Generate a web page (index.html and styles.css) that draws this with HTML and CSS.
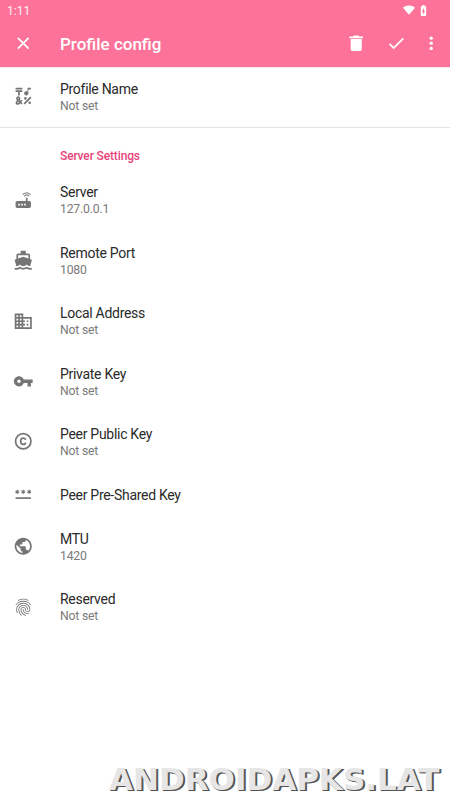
FILE: index.html
```html
<!DOCTYPE html>
<html lang="en">
<head>
<meta charset="utf-8">
<title>Profile config</title>
<link rel="stylesheet" href="styles.css">
</head>
<body>
<header class="header">
  <div class="status">
    <span class="clock">1:11</span>
    <svg class="wifi" viewBox="0 0 24 24"><path d="M12 21.5L24 7.5C20.500 4.500 16.500 3 12 3S3.500 4.500 0 7.500z"/></svg>
    <svg class="battery" viewBox="0 0 24 24"><path d="M15.670 4H14V2h-4v2H8.330C7.600 4 7 4.600 7 5.330v15.330C7 21.400 7.600 22 8.330 22h7.330c.740 0 1.340-.600 1.340-1.330V5.330C17 4.600 16.400 4 15.670 4zM11 20v-5.500H9L13 7v5.500h2L11 20z"/></svg>
  </div>
  <div class="toolbar">
    <svg class="icon" viewBox="0 0 24 24"><path d="M19 6.410L17.590 5 12 10.590 6.410 5 5 6.410 10.590 12 5 17.590 6.410 19 12 13.410 17.590 19 19 17.590 13.410 12z"/></svg>
    <h1 class="title">Profile config</h1>
    <svg class="icon trash" viewBox="0 0 24 24"><path d="M5.500 19c0 1.100.900 2 2 2h9c1.100 0 2-.900 2-2V7h-13v12zM20 4h-4.500l-1-1h-5l-1 1H4v2h16V4z"/></svg>
    <svg class="icon check" viewBox="0 0 24 24"><path d="M9 16.200L4.800 12l-1.400 1.400L9 19 21 7l-1.400-1.400L9 16.200z"/></svg>
    <svg class="icon" viewBox="0 0 24 24"><circle cx="12" cy="6" r="2"/><circle cx="12" cy="12" r="2"/><circle cx="12" cy="18" r="2"/></svg>
  </div>
</header>
<main>
  <section class="group">
    <div class="row">
      <svg class="icon" viewBox="0 0 24 24"><path d="M3 2h8v2H3zM6 11h2V7h3V5H3v2h3zM12.404 20.182l7.778-7.778 1.414 1.414-7.778 7.778zM15.500 11c1.380 0 2.500-1.120 2.500-2.500V4h3V2h-4v4.510c-.420-.320-.930-.510-1.500-.510C14.120 6 13 7.120 13 8.500s1.120 2.500 2.500 2.500z"/><circle cx="14.500" cy="14.500" r="1.500"/><circle cx="19.500" cy="19.500" r="1.500"/><path d="M9.740 15.960l-1.410 1.410-.710-.710.350-.350c.980-.980.980-2.560 0-3.540-.490-.490-1.130-.730-1.770-.730s-1.280.240-1.770.730c-.980.980-.980 2.560 0 3.540l.350.350-1.060 1.060c-.980.980-.980 2.560 0 3.540.490.490 1.130.730 1.770.730s1.280-.240 1.770-.730l1.060-1.060 1.410 1.410 1.410-1.410-1.410-1.410 1.410-1.410-1.400-1.420zM5.850 14.200c.120-.120.260-.150.350-.150s.230.030.350.150c.190.200.190.510 0 .710l-.350.350-.350-.360c-.190-.190-.190-.510 0-.700zm0 5.650c-.120.120-.260.150-.350.150s-.230-.030-.350-.150c-.190-.200-.190-.510 0-.710l1.060-1.060.710.710-1.070 1.060z"/></svg>
      <div class="text"><div class="name">Profile Name</div><div class="value">Not set</div></div>
    </div>
  </section>
  <section>
    <h2 class="category">Server Settings</h2>
    <div class="row">
      <svg class="icon" viewBox="0 0 24 24"><path d="M20.200 5.900l.800-.800C19.600 3.700 17.800 3 16 3s-3.600.700-5 2.100l.800.800C13 4.800 14.500 4.200 16 4.200s3 .600 4.200 1.700zm-.900.800c-.900-.900-2.100-1.400-3.300-1.400s-2.400.500-3.300 1.400l.800.800c.700-.700 1.600-1 2.500-1 .900 0 1.800.300 2.500 1l.800-.800zM19 13h-2V9h-2v4H5c-1.100 0-2 .900-2 2v4c0 1.100.900 2 2 2h14c1.100 0 2-.900 2-2v-4c0-1.100-.900-2-2-2zM8 18H6v-2h2v2zm3.500 0h-2v-2h2v2zm3.500 0h-2v-2h2v2z"/></svg>
      <div class="text"><div class="name">Server</div><div class="value">127.0.0.1</div></div>
    </div>
    <div class="row">
      <svg class="icon" viewBox="0 0 24 24"><path d="M20 21c-1.390 0-2.780-.470-4-1.320-2.440 1.710-5.560 1.710-8 0C6.780 20.530 5.390 21 4 21H2v2h2c1.380 0 2.740-.350 4-.990 2.520 1.290 5.480 1.290 8 0 1.260.650 2.620.990 4 .990h2v-2h-2zM3.950 19H4c1.600 0 3.020-.880 4-2 .980 1.120 2.400 2 4 2s3.020-.880 4-2c.980 1.120 2.400 2 4 2h.050l1.890-6.680c.080-.260.060-.540-.060-.780s-.340-.420-.600-.500L20 10.620V6c0-1.100-.900-2-2-2h-3V1H9v3H6c-1.100 0-2 .900-2 2v4.620l-1.290.420c-.260.080-.480.260-.600.500s-.150.520-.060.780L3.950 19zM6 6h12v3.970L12 8 6 9.970V6z"/></svg>
      <div class="text"><div class="name">Remote Port</div><div class="value">1080</div></div>
    </div>
    <div class="row">
      <svg class="icon" viewBox="0 0 24 24"><path d="M12 7V3H2v18h20V7H12zM6 19H4v-2h2v2zm0-4H4v-2h2v2zm0-4H4V9h2v2zm0-4H4V5h2v2zm4 12H8v-2h2v2zm0-4H8v-2h2v2zm0-4H8V9h2v2zm0-4H8V5h2v2zm10 12h-8v-2h2v-2h-2v-2h2v-2h-2V9h8v10zm-2-8h-2v2h2v-2zm0 4h-2v2h2v-2z"/></svg>
      <div class="text"><div class="name">Local Address</div><div class="value">Not set</div></div>
    </div>
    <div class="row">
      <svg class="icon" viewBox="0 0 24 24"><path d="M12.650 10C11.830 7.670 9.610 6 7 6c-3.310 0-6 2.690-6 6s2.690 6 6 6c2.610 0 4.830-1.670 5.650-4H17v4h4v-4h2v-4H12.650zM7 14c-1.100 0-2-.900-2-2s.900-2 2-2 2 .900 2 2-.900 2-2 2z"/></svg>
      <div class="text"><div class="name">Private Key</div><div class="value">Not set</div></div>
    </div>
    <div class="row">
      <svg class="icon" viewBox="0 0 24 24"><circle class="line" cx="12" cy="12" r="9"/><path class="line" d="M14.700 10.500C14.500 9.200 13.400 8.300 12 8.300c-2 0-3.050 1.500-3.050 3.700S10 15.700 12 15.700c1.400 0 2.500-.900 2.700-2.200"/></svg>
      <div class="text"><div class="name">Peer Public Key</div><div class="value">Not set</div></div>
    </div>
    <div class="row single">
      <svg class="icon" viewBox="0 0 24 24"><path d="M3 15.500h18v2H3z"/><path class="stars" d="M5 6.800v4.800M2.900 8l4.200 2.400M7.100 8l-4.200 2.400M12 6.800v4.800M9.900 8l4.200 2.400M14.100 8l-4.200 2.400M19 6.800v4.800M16.900 8l4.200 2.400M21.100 8l-4.200 2.400"/></svg>
      <div class="text"><div class="name">Peer Pre-Shared Key</div></div>
    </div>
    <div class="row">
      <svg class="icon" viewBox="0 0 24 24"><path d="M12 2C6.480 2 2 6.480 2 12s4.480 10 10 10 10-4.480 10-10S17.520 2 12 2zm-1 17.930c-3.950-.490-7-3.850-7-7.930 0-.620.080-1.210.210-1.790L9 15v1c0 1.100.900 2 2 2v1.930zm6.900-2.540c-.260-.810-1-1.390-1.900-1.390h-1v-3c0-.550-.450-1-1-1H8v-2h2c.550 0 1-.450 1-1V7h2c1.100 0 2-.900 2-2v-.410c2.930 1.190 5 4.060 5 7.410 0 2.080-.800 3.970-2.100 5.390z"/></svg>
      <div class="text"><div class="name">MTU</div><div class="value">1420</div></div>
    </div>
    <div class="row">
      <svg class="icon" viewBox="0 0 24 24"><path d="M17.810 4.470c-.080 0-.160-.020-.230-.060C15.660 3.420 14 3 12.010 3c-1.980 0-3.860.470-5.570 1.410-.240.130-.540.040-.680-.200-.130-.240-.040-.550.200-.680C7.820 2.520 9.860 2 12.010 2c2.130 0 3.990.470 6.030 1.520.250.130.340.430.210.670-.090.180-.260.280-.440.280zM3.500 9.720c-.100 0-.200-.030-.290-.090-.230-.160-.280-.470-.120-.700.990-1.400 2.250-2.500 3.750-3.270C9.980 4.040 14 4.030 17.150 5.650c1.500.770 2.760 1.860 3.750 3.250.160.220.110.540-.120.700-.230.160-.540.110-.700-.120-.900-1.260-2.040-2.250-3.390-2.940-2.870-1.470-6.540-1.470-9.400.010-1.360.700-2.500 1.700-3.400 2.960-.080.140-.230.210-.390.210zm6.250 12.070c-.130 0-.260-.050-.350-.150-.870-.870-1.340-1.430-2.010-2.640-.690-1.230-1.050-2.730-1.050-4.340 0-2.970 2.540-5.390 5.660-5.390s5.660 2.420 5.660 5.390c0 .280-.220.500-.500.500s-.500-.220-.500-.500c0-2.420-2.090-4.390-4.660-4.390-2.570 0-4.660 1.970-4.660 4.390 0 1.440.320 2.770.930 3.850.640 1.150 1.080 1.640 1.850 2.420.190.200.190.510 0 .710-.110.100-.240.150-.370.150zm7.170-1.850c-1.190 0-2.240-.300-3.100-.890-1.490-1.010-2.380-2.650-2.380-4.390 0-.280.220-.500.500-.500s.500.220.500.500c0 1.410.720 2.740 1.940 3.560.710.480 1.540.710 2.540.710.240 0 .640-.030 1.040-.100.270-.050.530.130.580.410.050.270-.130.530-.410.580-.570.110-1.070.120-1.210.120zM14.910 22c-.040 0-.090-.010-.130-.020-1.590-.440-2.630-1.030-3.720-2.100-1.400-1.390-2.170-3.240-2.170-5.220 0-1.620 1.380-2.940 3.080-2.940 1.700 0 3.080 1.320 3.080 2.940 0 1.070.930 1.940 2.080 1.940s2.080-.870 2.080-1.940c0-3.770-3.250-6.830-7.250-6.830-2.840 0-5.440 1.580-6.610 4.030-.390.810-.590 1.760-.590 2.800 0 .780.070 2.010.670 3.610.100.260-.030.550-.290.640-.260.100-.550-.040-.640-.290-.490-1.310-.730-2.610-.730-3.960 0-1.200.230-2.290.680-3.240 1.330-2.790 4.280-4.600 7.510-4.600 4.550 0 8.250 3.510 8.250 7.830 0 1.620-1.380 2.940-3.080 2.940s-3.080-1.320-3.080-2.940c0-1.070-.930-1.940-2.080-1.940s-2.080.870-2.080 1.940c0 1.710.660 3.310 1.870 4.510.950.940 1.860 1.460 3.270 1.850.270.070.420.350.350.610-.050.230-.260.380-.470.380z"/></svg>
      <div class="text"><div class="name">Reserved</div><div class="value">Not set</div></div>
    </div>
  </section>
</main>
<div class="watermark">ANDROIDAPKS.LAT</div>
</body>
</html>
```

FILE: styles.css
```css
* { box-sizing: border-box; }
body {
  margin: 0;
  height: 800px;
  overflow: hidden;
  position: relative;
  background: #fff;
  color: #2a2a2a;
  font-family: Roboto, sans-serif;
}
h1, h2 { margin: 0; }
.header {
  height: 67px;
  background: #fc7299;
  color: #fff;
  box-shadow: 0 0 1px #fc7299;
}
.status {
  height: 20px;
  display: flex;
  align-items: center;
  padding: 0 20px 0 7px;
}
.clock { flex: 1; font-size: 12px; line-height: 20px; padding-top: 1px; opacity: .9; }
.wifi { width: 12px; height: 12px; margin-right: 2px; fill: #fff; }
.battery { width: 13px; height: 13px; fill: #fff; }
.toolbar {
  height: 47px;
  display: flex;
  align-items: center;
  padding: 0 8.5px 0 13px;
}
.title { flex: 1; margin: 1px 0 0 26.5px; font-size: 17px; font-weight: 500; line-height: 22px; }
.icon { width: 20.5px; height: 20.5px; flex: none; fill: currentColor; }
.trash { margin-right: 19.5px; }
.check { margin-right: 14.5px; }
.group { border-bottom: 1px solid #e2e2e2; }
.row {
  height: 60.4px;
  display: flex;
  align-items: center;
  padding-left: 13px;
}
.single { height: 44.6px; }
.row .icon { color: #757575; margin: 0 26.5px 1px 0; }
.line { fill: none; stroke: currentColor; stroke-width: 2; }
.stars { fill: none; stroke: currentColor; stroke-width: 1.3; }
.text { padding-top: 1.5px; }
.name { font-size: 14px; line-height: 17px; letter-spacing: -.29px; }
.value { font-size: 12.200px; line-height: 17px; color: #7a7a7a; letter-spacing: -.18px; }
.single .text { padding-top: 1px; }
.category {
  height: 42px;
  padding: 20px 0 0 60px;
  font-size: 12px;
  font-weight: 500;
  line-height: 16px;
  letter-spacing: -.14px;
  color: #e8447a;
}
.watermark {
  position: absolute;
  left: 109px;
  top: 762px;
  font: bold 31px/34px "DejaVu Sans", sans-serif;
  color: #e6e6e6;
  white-space: nowrap;
  text-shadow: 1px 1px #555, 2px 1px #555;
}
```
